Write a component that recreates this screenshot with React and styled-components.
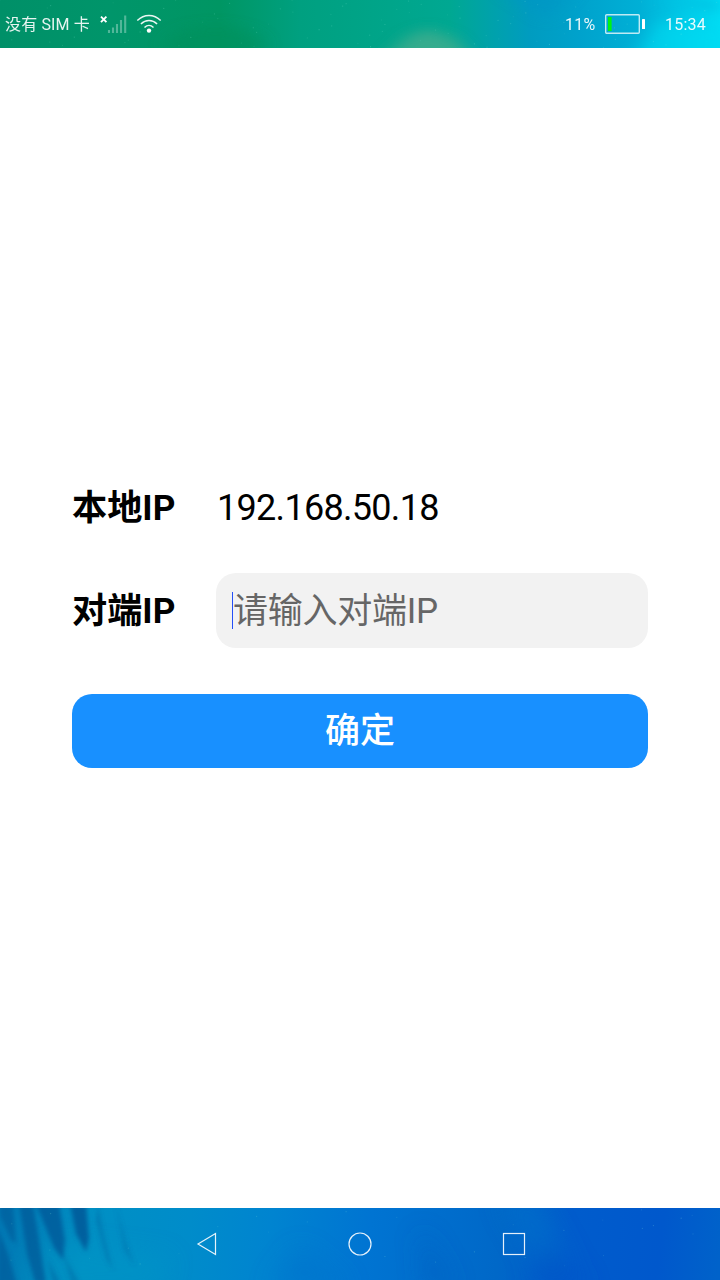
import React from "react";
import styled, { createGlobalStyle } from "styled-components";

const GlobalStyle = createGlobalStyle`
  * { box-sizing: border-box; }
  body {
    margin: 0;
    background: #fff;
    font-family: Roboto, "Noto Sans CJK SC", sans-serif;
  }
`;

const Screen = styled.div`
  display: flex;
  flex-direction: column;
  width: 720px;
  height: 1280px;
  overflow: hidden;
`;

const StatusBar = styled.header`
  position: relative;
  display: flex;
  align-items: center;
  justify-content: space-between;
  flex: 0 0 48px;
  padding: 0 13px 0 5px;
  overflow: hidden;
  color: rgba(255, 255, 255, 0.9);
  background: linear-gradient(90deg, #009068 0, #00956a 110px, #009663 220px, #00a080 300px, #00a58a 390px, #00a892 450px, #00a2aa 490px, #009cc0 530px, #00a2cc 580px, #00b0d6 640px, #00cdea 690px, #00dcf4 720px);
`;

const Wallpaper = styled.svg`
  position: absolute;
  inset: 0;
  width: 100%;
  height: 100%;
`;

const StatusGroup = styled.div`
  position: relative;
  display: flex;
  align-items: center;
`;

const StatusText = styled.span`
  width: ${(p) => p.$width}px;
  padding-top: 2px;
  font-size: 16px;
  line-height: 24px;
  letter-spacing: ${(p) => p.$spacing || 0}px;
  white-space: nowrap;
`;

const Clock = styled(StatusText)`
  margin-left: 19px;
`;

const Glyph = styled.svg`
  display: block;
  margin-left: ${(p) => p.$gap || 0}px;
  fill: none;
`;

const Content = styled.main`
  display: flex;
  flex: 1;
  flex-direction: column;
  padding: 422px 72px 0;
`;

const Row = styled.div`
  display: flex;
  align-items: center;
  height: ${(p) => p.$height}px;
  margin-bottom: ${(p) => p.$gap}px;
`;

const Label = styled.label`
  flex: 0 0 144px;
  font-size: 35.2px;
  font-weight: 700;
  line-height: 46px;
  white-space: nowrap;
  color: #000;
`;

const Address = styled.span`
  padding-left: 1px;
  font-size: 36px;
  line-height: 46px;
  letter-spacing: -0.7px;
  color: #000;
`;

const Field = styled.div`
  display: flex;
  flex: 1;
  align-items: center;
  height: 75px;
  padding-left: 16px;
  border-radius: 20px;
  background: #f2f2f2;
`;

const Caret = styled.i`
  width: 1px;
  height: 37px;
  background: #254ff7;
`;

const Placeholder = styled.span`
  padding-top: 2px;
  font-size: 35px;
  line-height: 46px;
  letter-spacing: -0.25px;
  color: #666;
`;

const Confirm = styled.button`
  height: 74px;
  padding: 2px 0 0;
  border: 0;
  border-radius: 20px;
  background: #1890ff;
  color: #fff;
  font-family: inherit;
  font-size: 35px;
  font-weight: 500;
  line-height: 46px;
`;

const NavBar = styled.nav`
  position: relative;
  display: flex;
  align-items: center;
  justify-content: center;
  gap: 129.5px;
  flex: 0 0 72px;
  overflow: hidden;
  background: linear-gradient(97deg, #0078b4 0, #0090c4 90px, #008cca 190px, #0084d0 270px, #0074d2 370px, #0068c8 500px, #005ccc 570px, #0058cc 660px, #0062ca 720px);
`;

const NavIcon = styled.svg`
  position: relative;
  width: 24px;
  height: 24px;
  fill: none;
  stroke: rgba(255, 255, 255, 0.9);
  stroke-width: 1.2;
`;

const specks = (count, width, height) =>
  Array.from({ length: count }, (_, i) => ({
    x: (i * 97.31 + (i % 7) * 31) % width,
    y: (i * 29.17 + (i % 5) * 11) % height,
    o: 0.1 + (i % 4) * 0.05,
  }));

const Specks = ({ count, height }) =>
  specks(count, 720, height).map((s, i) => (
    <circle key={i} cx={s.x} cy={s.y} r="0.6" fill="#8ff5df" opacity={s.o} />
  ));

function StatusWallpaper() {
  return (
    <Wallpaper viewBox="0 0 720 48" aria-hidden="true">
      <defs>
        <filter id="haze" x="-50%" y="-100%" width="200%" height="300%">
          <feGaussianBlur stdDeviation="9 6" />
        </filter>
      </defs>
      <g filter="url(#haze)">
        <ellipse cx="215" cy="44" rx="48" ry="18" fill="#00905a" opacity="0.5" />
        <path d="M380 62 408 36 428 29 454 38 476 62Z" fill="#45ad8d" opacity="0.75" />
        <path d="M500-10H575L548 20Z" fill="#0094c6" opacity="0.5" />
        <path d="M632 60 660 20 720 30V60Z" fill="#00dcf2" opacity="0.6" />
        <path d="M665 0H720V12Z" fill="#00b8dc" opacity="0.7" />
      </g>
      <Specks count={90} height={48} />
    </Wallpaper>
  );
}

function NavWallpaper() {
  return (
    <Wallpaper viewBox="0 0 720 72" aria-hidden="true">
      <defs>
        <filter id="soft" x="-50%" y="-50%" width="200%" height="200%">
          <feGaussianBlur stdDeviation="2.1" />
        </filter>
        <filter id="wide" x="-50%" y="-100%" width="200%" height="300%">
          <feGaussianBlur stdDeviation="12" />
        </filter>
      </defs>
      <g filter="url(#wide)">
        <path d="M20 80 50 35 170 50 160 80Z" fill="#0098c6" opacity="0.4" />
        <path d="M270 80 300 40 350 80Z" fill="#0070cc" opacity="0.5" />
        <path d="M500-10H535L570 55 540 60Z" fill="#0074cc" opacity="0.5" />
        <path d="M545 30 590 80H530Z" fill="#0050c6" opacity="0.5" />
        <path d="M420 20 455 80H425Z" fill="#0058bc" opacity="0.4" />
      </g>
      <g filter="url(#soft)" fill="#005898">
        <path d="M0-5H13L16 36 11 32 0 8Z" opacity="0.6" />
        <path d="M19-4H33L38 26 46 75H35L27 46Z" opacity="0.75" />
        <path d="M36-4H59L65 32 63 52 54 40Z" opacity="0.8" />
        <path d="M70-4H86L89 30 86 44 76 26Z" opacity="0.85" />
        <path d="M-2 20 8 46 17 76H-2Z" opacity="0.65" />
        <path d="M98-4 104 28 113 62 106 50 96 12Z" opacity="0.35" />
        <path d="M116-4 126 34 135 58 124 42Z" opacity="0.3" />
        <path d="M47 50 60 75H53Z" opacity="0.4" />
        <path d="M62 44 80 76H72Z" opacity="0.35" />
      </g>
      <Specks count={30} height={72} />
    </Wallpaper>
  );
}

function SignalIcon() {
  return (
    <Glyph $gap={1} width="28" height="24" viewBox="0 0 28 24">
      <path d="M1 4.7 6.4 10.1M6.4 4.7 1 10.1" stroke="#fff" strokeWidth="1.9" />
      <path
        d="M9 18v3M13 15.5V21M17 12V21M21 8V21M25.2 3.5V21"
        stroke="#fff"
        strokeOpacity="0.32"
        strokeWidth="2.1"
      />
    </Glyph>
  );
}

function WifiIcon() {
  return (
    <Glyph $gap={8} width="26" height="24" viewBox="0 0 26 24">
      <path
        d="M1.3 8.4C8.2 1.8 17.8 1.8 24.7 8.4M4.9 12C9.8 7.4 16.2 7.4 21.1 12M8.5 15.4C11.2 12.8 14.8 12.8 17.5 15.4"
        stroke="#fff"
        strokeOpacity="0.92"
        strokeWidth="1.45"
      />
      <circle cx="13" cy="18.6" r="2.2" fill="#fff" />
    </Glyph>
  );
}

function BatteryIcon() {
  return (
    <Glyph width="42" height="22" viewBox="0 0 42 22">
      <rect x="1.7" y="1.7" width="33.6" height="18.6" rx="1" stroke="#fff" strokeOpacity="0.75" strokeWidth="1.4" />
      <rect x="4" y="4" width="3.6" height="14" fill="#00f510" />
      <rect x="38" y="6" width="3" height="10" rx="0.6" fill="#fff" />
    </Glyph>
  );
}

export default function App() {
  return (
    <>
      <GlobalStyle />
      <Screen>
        <StatusBar>
          <StatusWallpaper />
          <StatusGroup>
            <StatusText $width={94} $spacing={0.15}>没有 SIM 卡</StatusText>
            <SignalIcon />
            <WifiIcon />
          </StatusGroup>
          <StatusGroup>
            <StatusText $width={39} $spacing={0.2}>11%</StatusText>
            <BatteryIcon />
            <Clock $width={42} $spacing={0.2}>15:34</Clock>
          </StatusGroup>
        </StatusBar>
        <Content>
          <Row $height={76} $gap={27}>
            <Label>本地IP</Label>
            <Address>192.168.50.18</Address>
          </Row>
          <Row $height={75} $gap={46}>
            <Label>对端IP</Label>
            <Field>
              <Caret />
              <Placeholder>请输入对端IP</Placeholder>
            </Field>
          </Row>
          <Confirm>确定</Confirm>
        </Content>
        <NavBar>
          <NavWallpaper />
          <NavIcon viewBox="0 0 24 24">
            <path d="M3 12 20.5 1.5V22.5Z" />
          </NavIcon>
          <NavIcon viewBox="0 0 24 24">
            <circle cx="12" cy="12" r="11" />
          </NavIcon>
          <NavIcon viewBox="0 0 24 24">
            <rect x="1.5" y="1.5" width="21" height="21" />
          </NavIcon>
        </NavBar>
      </Screen>
    </>
  );
}
